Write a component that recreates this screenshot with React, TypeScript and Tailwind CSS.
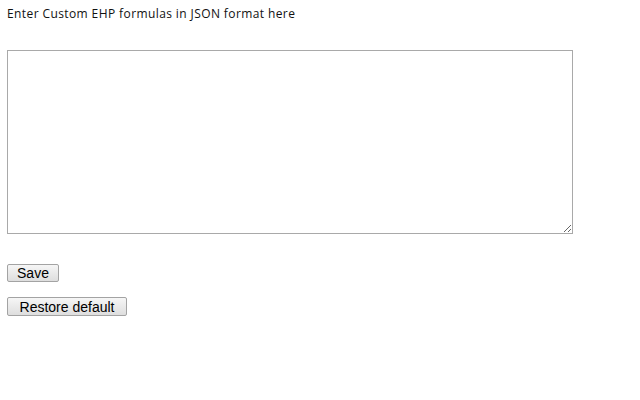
export default function App() {
  return (
    <div className="min-h-screen bg-white px-[7px] pt-[6px]">
      <p className="text-[12px] leading-[15px] tracking-[0.4px] text-[#111] font-['Open_Sans','Noto_Sans',sans-serif]">
        Enter Custom EHP formulas in JSON format here
      </p>
      <textarea className="mt-[29px] block h-[184px] w-[566px] resize border border-[#a9a9a9] bg-white outline-none" />
      <div className="mt-[30px] flex flex-col items-start gap-[15px] font-['Liberation_Sans',Arial,sans-serif] text-[14px] leading-[16px] text-black">
        <button className="h-[18px] w-[52px] rounded-[2px] border border-[#a3a3a3] bg-gradient-to-b from-[#f6f6f6] to-[#dedede]">
          Save
        </button>
        <button className="h-[19px] w-[120px] rounded-[2px] border border-[#a3a3a3] bg-gradient-to-b from-[#f6f6f6] to-[#dedede]">
          Restore default
        </button>
      </div>
    </div>
  );
}
